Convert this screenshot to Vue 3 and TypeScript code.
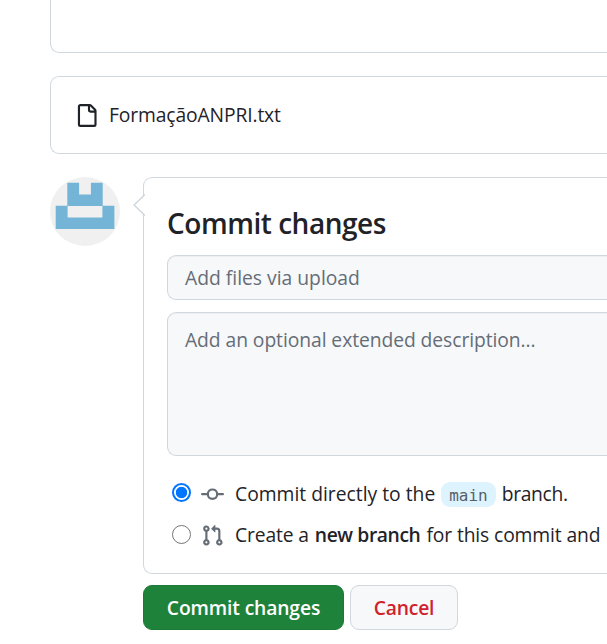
<script setup lang="ts">
import { ref } from 'vue'

const fileName = 'FormaçãoANPRI.txt'
const target = ref<'direct' | 'branch'>('direct')
</script>

<template>
  <main class="page">
    <section class="dropzone"></section>

    <section class="file">
      <svg class="file-icon" viewBox="0 0 16 16" aria-hidden="true">
        <path d="M2 1.75C2 .784 2.784 0 3.75 0h6.586c.464 0 .909.184 1.237.513l2.914 2.914c.329.328.513.773.513 1.237v9.586A1.75 1.75 0 0 1 13.25 16h-9.5A1.75 1.75 0 0 1 2 14.25Zm1.75-.25a.25.25 0 0 0-.25.25v12.5c0 .138.112.25.25.25h9.5a.25.25 0 0 0 .25-.25V6h-2.75A1.75 1.75 0 0 1 9 4.25V1.5Zm6.75.062V4.25c0 .138.112.25.25.25h2.688l-.011-.013-2.914-2.914-.013-.011Z" />
      </svg>
      <span class="file-name">{{ fileName }}</span>
    </section>

    <div class="commit">
      <svg class="avatar" viewBox="0 0 70 69" aria-hidden="true">
        <ellipse cx="35" cy="34.5" rx="35" ry="34.5" fill="#f0f0f0" />
        <path d="M17.3 5.8h11.8v11.6h11.8V5.8h11.8v23h11.7v23.1H5.7V28.8h11.6z" fill="#74b4d6" />
        <path d="M17.6 29h34.8v11.4H17.6z" fill="#f0f0f0" />
      </svg>

      <form class="form" @submit.prevent>
        <div class="panel">
          <svg class="caret" viewBox="0 0 12 22" aria-hidden="true">
            <path d="M12 0.5 L1 11 L12 21.5" fill="#fff" stroke="#d0d7de" stroke-width="1.5" />
          </svg>
          <h1 class="title">Commit changes</h1>
          <div class="field summary"><span class="t-summary">Add files via upload</span></div>
          <div class="field description"><span class="t-desc">Add an optional extended description...</span></div>

          <div class="option" @click="target = 'direct'">
            <span class="radio" :class="{ checked: target === 'direct' }"></span>
            <svg class="git" viewBox="0 0 16 16" aria-hidden="true">
              <path d="M11.93 8.5a4.002 4.002 0 0 1-7.86 0H.75a.75.75 0 0 1 0-1.5h3.32a4.002 4.002 0 0 1 7.86 0h3.32a.75.75 0 0 1 0 1.5Zm-1.43-.75a2.5 2.5 0 1 0-5 0 2.5 2.5 0 0 0 5 0Z" />
            </svg>
            <span class="t-direct">Commit directly to the</span>
            <code class="chip">main</code>
            <span class="t-end">branch.</span>
          </div>
          <div class="option second" @click="target = 'branch'">
            <span class="radio" :class="{ checked: target === 'branch' }"></span>
            <svg class="git" viewBox="0 0 16 16" aria-hidden="true">
              <path d="M1.5 3.25a2.25 2.25 0 1 1 3 2.122v5.256a2.251 2.251 0 1 1-1.5 0V5.372A2.25 2.25 0 0 1 1.5 3.25Zm5.677-.177L9.573.677A.25.25 0 0 1 10 .854V2.5h1A2.5 2.5 0 0 1 13.5 5v5.628a2.251 2.251 0 1 1-1.5 0V5a1 1 0 0 0-1-1h-1v1.646a.25.25 0 0 1-.427.177L7.177 3.427a.25.25 0 0 1 0-.354ZM3.75 2.5a.75.75 0 1 0 0 1.5.75.75 0 0 0 0-1.5Zm0 9.5a.75.75 0 1 0 0 1.5.75.75 0 0 0 0-1.5Zm8.25.75a.75.75 0 1 0 1.5 0 .75.75 0 0 0-1.5 0Z" />
            </svg>
            <span class="t-create">Create a</span>
            <b class="t-new">new branch</b>
            <span class="t-for">for this commit and</span>
          </div>
        </div>

        <div class="actions">
          <button class="btn primary" type="submit"><span class="t-submit">Commit changes</span></button>
          <button class="btn danger" type="button"><span class="t-cancel">Cancel</span></button>
        </div>
      </form>
    </div>
  </main>
</template>

<style>
body {
  margin: 0;
  background: #fff;
}
</style>

<style scoped>
.page {
  box-sizing: border-box;
  width: 100%;
  height: 644px;
  padding-left: 50px;
  overflow: hidden;
  color: #1f2328;
  font: 19.3px/30px "Open Sans", "Noto Sans", sans-serif;
  white-space: nowrap;
}
.page * {
  box-sizing: border-box;
}
.dropzone {
  height: 53px;
  border: 1px solid #d0d7de;
  border-width: 0 0 1px 1px;
  border-radius: 0 0 0 9px;
}
.file {
  display: flex;
  align-items: center;
  height: 78px;
  margin-top: 23px;
  padding-left: 24px;
  border: 1px solid #d0d7de;
  border-right: 0;
  border-radius: 9px 0 0 9px;
}
.file-icon {
  width: 23px;
  height: 23px;
  margin-right: 11px;
  fill: #1f2328;
}
.file-name {
  letter-spacing: -0.13px;
}
.commit {
  display: flex;
  align-items: flex-start;
  gap: 23px;
  margin-top: 23px;
}
.avatar {
  flex: none;
  width: 70px;
  height: 69px;
}
.form {
  flex: 1;
  min-width: 0;
}
.panel {
  position: relative;
  height: 397px;
  padding: 27px 0 0 23px;
  border: 1px solid #d0d7de;
  border-right: 0;
  border-radius: 9px 0 0 9px;
}
.caret {
  position: absolute;
  top: 16px;
  left: -11px;
  width: 12px;
  height: 22px;
}
.title {
  margin: 0;
  font-size: 28px;
  font-weight: 600;
  line-height: 36px;
  letter-spacing: -0.47px;
}
.field {
  padding: 7px 17px;
  border: 1px solid #d0d7de;
  border-right: 0;
  border-radius: 9px 0 0 9px;
  background: #f6f8fa;
  box-shadow: inset 0 1px 0 rgba(208, 215, 222, 0.25);
  color: #656d76;
}
.summary {
  height: 45px;
  margin-top: 14px;
}
.description {
  height: 144px;
  margin-top: 12px;
  padding-top: 12px;
}
.t-desc {
  letter-spacing: -0.07px;
}
.option {
  display: flex;
  align-items: center;
  height: 30px;
  margin-top: 23px;
  padding-left: 5px;
}
.second {
  margin-top: 11px;
}
.radio {
  flex: none;
  width: 19px;
  height: 19px;
  margin-top: -3px;
  border: 1.5px solid #767676;
  border-radius: 50%;
  background: #fff;
}
.second .radio {
  margin-top: -1px;
}
.radio.checked {
  border: 2px solid #0075ff;
  background: radial-gradient(circle, #0075ff 5.3px, #fff 6.1px);
}
.git {
  flex: none;
  width: 23px;
  height: 23px;
  margin: 0 11px 0 10px;
  fill: #656d76;
}
.chip {
  height: 25px;
  margin: 0 6px;
  padding: 0 8px;
  border-radius: 9px;
  background: #ddf4ff;
  color: #57606a;
  font: 16px/27px "DejaVu Sans Mono", monospace;
}
.t-end {
  letter-spacing: -0.35px;
}
.t-create {
  letter-spacing: -0.15px;
}
.t-new {
  margin: 0 6px;
  font-weight: 600;
  letter-spacing: -0.4px;
}
.t-for {
  letter-spacing: -0.13px;
}
.actions {
  display: flex;
  gap: 6px;
  margin-top: 11px;
}
.btn {
  height: 45px;
  padding: 0;
  border: 1px solid #d0d7de;
  border-radius: 9px;
  background: #f6f8fa;
  font: inherit;
  font-weight: 600;
}
.primary {
  width: 201px;
  border-color: #1b7a36;
  background: #1f823a;
  color: #fff;
}
.t-submit {
  letter-spacing: -0.14px;
}
.danger {
  width: 108px;
  color: #cf222e;
}
.t-cancel {
  letter-spacing: -0.2px;
}
</style>
